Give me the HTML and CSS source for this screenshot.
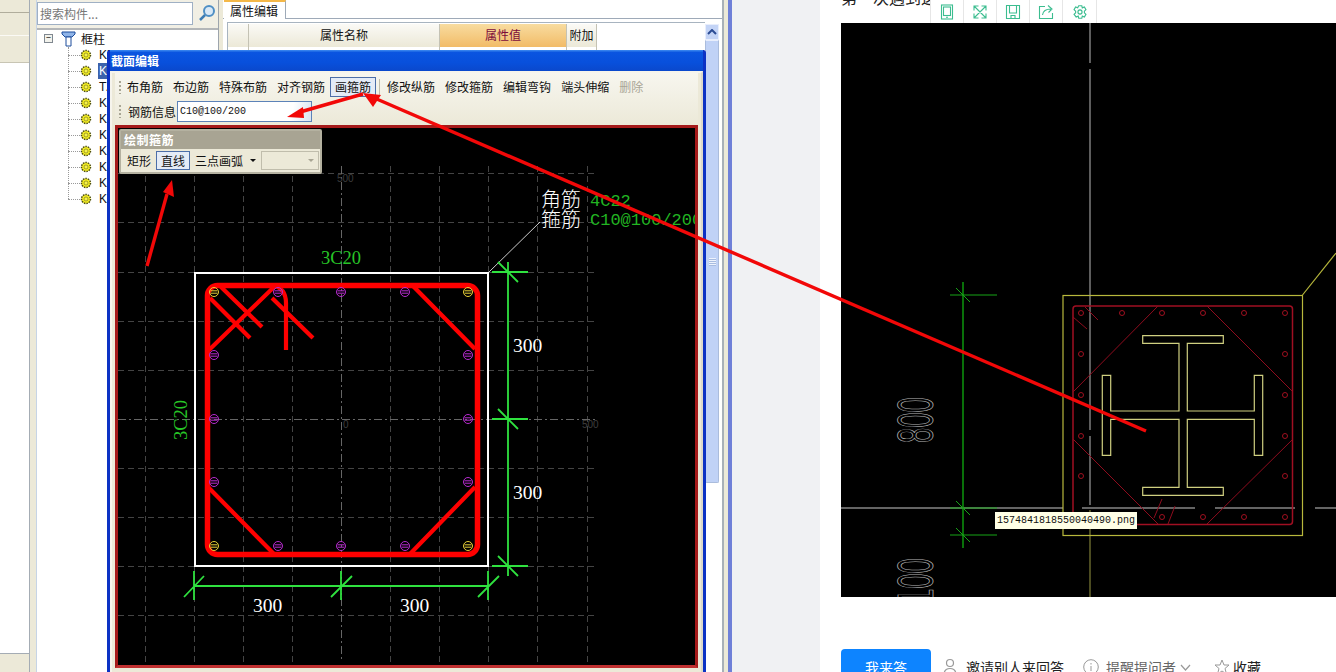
FILE: index.html
```html
<!DOCTYPE html>
<html lang="zh-CN">
<head>
<meta charset="utf-8">
<title>截面编辑</title>
<link rel="stylesheet" href="styles.css">
</head>
<body>
<div class="app">
  <div class="dock">
    <div class="dock-a"></div>
    <div class="dock-b"></div>
    <div class="dock-white"></div>
  </div>
  <div class="tree-panel">
    <div class="search">
      <div class="search-input">搜索构件...</div>
      <svg class="search-icon" viewBox="0 0 20 20"><circle class="mag-ring" cx="12" cy="8" r="5"/><path class="mag-handle" d="M8 12L3 17"/></svg>
    </div>
    <div class="tree">
      <div class="root-row">
        <span class="expander">−</span>
        <svg class="col-icon" viewBox="0 0 15 16"><path class="col-top" d="M1 1H14V3L11 6H4L1 3Z"/><path class="col-shaft" d="M5 6H10V15H5Z"/></svg>
        <span>框柱</span>
      </div>
      <div class="kids">
        <div class="kid"><i class="dash"></i><svg class="gear" viewBox="0 0 12 12"><circle class="gear-out" cx="6" cy="6" r="4.5"/><circle class="gear-in" cx="6" cy="6" r="2"/></svg><span class="kid-label">KZ-1</span></div>
        <div class="kid"><i class="dash"></i><svg class="gear" viewBox="0 0 12 12"><circle class="gear-out" cx="6" cy="6" r="4.5"/><circle class="gear-in" cx="6" cy="6" r="2"/></svg><span class="kid-label sel">KZ-2</span></div>
        <div class="kid"><i class="dash"></i><svg class="gear" viewBox="0 0 12 12"><circle class="gear-out" cx="6" cy="6" r="4.5"/><circle class="gear-in" cx="6" cy="6" r="2"/></svg><span class="kid-label">TZ-1</span></div>
        <div class="kid"><i class="dash"></i><svg class="gear" viewBox="0 0 12 12"><circle class="gear-out" cx="6" cy="6" r="4.5"/><circle class="gear-in" cx="6" cy="6" r="2"/></svg><span class="kid-label">KZ-3</span></div>
        <div class="kid"><i class="dash"></i><svg class="gear" viewBox="0 0 12 12"><circle class="gear-out" cx="6" cy="6" r="4.5"/><circle class="gear-in" cx="6" cy="6" r="2"/></svg><span class="kid-label">KZ-4</span></div>
        <div class="kid"><i class="dash"></i><svg class="gear" viewBox="0 0 12 12"><circle class="gear-out" cx="6" cy="6" r="4.5"/><circle class="gear-in" cx="6" cy="6" r="2"/></svg><span class="kid-label">KZ-5</span></div>
        <div class="kid"><i class="dash"></i><svg class="gear" viewBox="0 0 12 12"><circle class="gear-out" cx="6" cy="6" r="4.5"/><circle class="gear-in" cx="6" cy="6" r="2"/></svg><span class="kid-label">KZ-6</span></div>
        <div class="kid"><i class="dash"></i><svg class="gear" viewBox="0 0 12 12"><circle class="gear-out" cx="6" cy="6" r="4.5"/><circle class="gear-in" cx="6" cy="6" r="2"/></svg><span class="kid-label">KZ-7</span></div>
        <div class="kid"><i class="dash"></i><svg class="gear" viewBox="0 0 12 12"><circle class="gear-out" cx="6" cy="6" r="4.5"/><circle class="gear-in" cx="6" cy="6" r="2"/></svg><span class="kid-label">KZ-8</span></div>
        <div class="kid"><i class="dash"></i><svg class="gear" viewBox="0 0 12 12"><circle class="gear-out" cx="6" cy="6" r="4.5"/><circle class="gear-in" cx="6" cy="6" r="2"/></svg><span class="kid-label">KZ-9</span></div>
      </div>
    </div>
  </div>
  <div class="props">
    <div class="tabs"><div class="tab">属性编辑</div></div>
    <div class="prop-body">
      <div class="prop-table">
        <div class="th th-blank"></div>
        <div class="th th-name">属性名称</div>
        <div class="th th-value">属性值</div>
        <div class="th th-extra">附加</div>
      </div>
      <div class="scroll">
        <div class="scroll-btn"><svg class="chev-up" viewBox="0 0 10 6"><path d="M1 5L5 1L9 5"/></svg></div>
        <div class="scroll-thumb"><div class="grip"></div></div>
      </div>
    </div>
  </div>
</div>

<div class="window">
  <div class="win-title">截面编辑</div>
  <div class="win-body">
    <div class="win-bars">
      <div class="bar">
        <i class="bar-grip"></i>
        <span class="tb">布角筋</span>
        <span class="tb">布边筋</span>
        <span class="tb">特殊布筋</span>
        <span class="tb">对齐钢筋</span>
        <span class="tb tb-on">画箍筋</span>
        <i class="bar-sep"></i>
        <span class="tb">修改纵筋</span>
        <span class="tb">修改箍筋</span>
        <span class="tb">编辑弯钩</span>
        <span class="tb">端头伸缩</span>
        <span class="tb tb-off">删除</span>
      </div>
      <div class="bar">
        <i class="bar-grip"></i>
        <span class="info-label">钢筋信息</span>
        <span class="info-input">C10@100/200</span>
      </div>
    </div>
    <div class="canvas">
      <svg class="cad" viewBox="118 128 577 537">
        <defs>
          <g id="rb"><circle r="4.5"/><path d="M-3.5 -1.2H3.5M-3.5 1.2H3.5"/></g>
        </defs>
        <path class="grid" d="M145.5 166V662M194.5 166V662M243.5 166V662M292.5 166V662M390.5 166V662M439.5 166V662M488.5 166V662M537.5 166V662M587.5 166V662M118 173.5H597M118 222.5H597M118 272.5H597M118 321.5H597M118 370.5H597M118 468.5H597M118 517.5H597M118 566.5H597M118 615.5H597"/>
        <path class="grid-main" d="M341.5 166V662M118 419.5H597"/>
        <text class="dim-label" x="337" y="182">500</text>
        <text class="dim-label" x="582" y="428">500</text>
        <text class="dim-label" x="343" y="428">0</text>

        <rect class="section" x="195" y="273" width="293" height="293"/>
        <path class="leader" d="M489 272L540 222"/>

        <rect class="stirrup" x="207.5" y="285.5" width="270" height="269" rx="10"/>
        <path class="tie" d="M412 285L475 349M208 487L274 554M410 554L475 487M209 350L275 286M219 285L262 327M210 298L250 338"/>
        <path class="tie" d="M272 285C282 287 286 294 286 303V350M272 298L313 338"/>

        <g class="bar-mid">
          <use href="#rb" x="278" y="292"/><use href="#rb" x="341" y="292"/><use href="#rb" x="405" y="292"/>
          <use href="#rb" x="214" y="355"/><use href="#rb" x="468" y="355"/>
          <use href="#rb" x="214" y="419"/><use href="#rb" x="468" y="419"/>
          <use href="#rb" x="214" y="482"/><use href="#rb" x="468" y="482"/>
          <use href="#rb" x="278" y="546"/><use href="#rb" x="341" y="546"/><use href="#rb" x="405" y="546"/>
        </g>
        <g class="bar-corner">
          <use href="#rb" x="214" y="292"/><use href="#rb" x="468" y="292"/>
          <use href="#rb" x="214" y="546"/><use href="#rb" x="468" y="546"/>
        </g>

        <g class="dim">
          <path d="M508 262V576M492 272H528M492 419H528M492 566H528M498 262L518 282M498 409L518 429M498 556L518 576"/>
          <path d="M194 586H489M194 571V600M341 571V600M488 571V600M184 597L204 576M331 597L352 576M478 597L499 576"/>
        </g>
        <text class="t-green" x="321" y="264">3C20</text>
        <text class="t-green" transform="translate(187 440) rotate(-90)">3C20</text>
        <text class="t-white" x="253" y="612">300</text>
        <text class="t-white" x="400" y="612">300</text>
        <text class="t-white" x="513" y="352">300</text>
        <text class="t-white" x="513" y="499">300</text>
        <text class="t-cjk" x="541" y="207">角筋</text>
        <text class="t-cjk" x="541" y="227">箍筋</text>
        <text class="t-mono" x="590" y="206">4C22</text>
        <text class="t-mono" x="590" y="225">C10@100/200</text>
      </svg>
      <div class="float">
        <div class="float-title">绘制箍筋</div>
        <div class="float-row">
          <span class="fb">矩形</span>
          <span class="fb fb-on">直线</span>
          <span class="fb">三点画弧</span>
          <span class="drop"></span>
          <span class="combo"><span class="combo-caret"></span></span>
        </div>
      </div>
    </div>
  </div>
</div>

<div class="gutter"></div>

<div class="content">
  <div class="q-title">第一次遇到这</div>
  <div class="tools">
    <span class="tool"><svg viewBox="0 0 16 16"><rect x="2.5" y="1" width="11" height="14"/><rect x="4.5" y="3" width="7" height="8.5"/><path d="M7 13.3H9"/></svg></span>
    <span class="tool"><svg viewBox="0 0 16 16"><path d="M2 2L14 14M14 2L2 14M2 6.500V2H6.500M9.500 2H14V6.500M2 9.500V14H6.500M9.500 14H14V9.500"/></svg></span>
    <span class="tool"><svg viewBox="0 0 16 16"><path d="M1.500 1.500H14.500V14.500H1.500ZM4.500 1.500V9H11.500V1.500M6 14.500V11.500H10V14.500"/></svg></span>
    <span class="tool"><svg viewBox="0 0 16 16"><path d="M7 2.500H1.500V14.500H14.500V9M4.500 11C5 7 8 5 13 5M10 1.500L14 5L10.500 8.500"/></svg></span>
    <span class="tool"><svg viewBox="0 0 15.5 14"><path d="M6.500 1h3l.5 2 2-.8 1.500 2.600-1.500 1.400v1.600l1.500 1.400-1.500 2.600-2-.8-.5 2h-3l-.5-2-2 .8L2 9.200 3.500 7.800V6.200L2 4.800l1.500-2.600 2 .8z"/><circle cx="7.75" cy="7" r="2"/></svg></span>
  </div>
  <div class="figure">
    <svg class="plan" viewBox="841 23 495 574">
      <path class="axis" d="M1090 23V63M1090 69V430M1090 436V505"/>
      <path class="axis-low" d="M1090 510V597"/>
      <path class="cross" d="M841 508H1063M1082 508H1195M1215 508H1295M1315 508H1336"/>
      <path class="green-v" d="M963 282V548"/>
      <path class="green-h" d="M950 295H997M950 508H997M950 535H997M956 288L970 302M956 501L970 515M956 528L970 542"/>
      <text class="outline" transform="translate(933 443) rotate(-90) scale(.55 1)">800</text>
      <text class="outline" transform="translate(933 604) rotate(-90) scale(.55 1)">100</text>
      <rect class="col-box" x="1063" y="295.5" width="239.5" height="240"/>
      <path class="col-box" d="M1302.500 295L1336 253"/>
      <rect class="red-box" x="1073" y="306" width="219.5" height="218.5" rx="3"/>
      <path class="red-thin" d="M1158 306L1073 392M1207 306L1292 391M1073 439L1158 524M1292 440L1207 524M1085 307L1098 320M1073 317L1087 329M1162 499L1154 518M1175 506L1168 524"/>
      <g class="holes">
        <circle cx="1081" cy="313" r="2.5"/><circle cx="1122" cy="313" r="2.5"/><circle cx="1162" cy="313" r="2.5"/><circle cx="1203" cy="313" r="2.5"/><circle cx="1244" cy="313" r="2.5"/><circle cx="1285" cy="313" r="2.5"/>
        <circle cx="1081" cy="354" r="2.5"/><circle cx="1285" cy="354" r="2.5"/>
        <circle cx="1081" cy="395" r="2.5"/><circle cx="1285" cy="395" r="2.5"/>
        <circle cx="1081" cy="436" r="2.5"/><circle cx="1285" cy="436" r="2.5"/>
        <circle cx="1081" cy="476" r="2.5"/><circle cx="1285" cy="476" r="2.5"/>
        <circle cx="1081" cy="517" r="2.5"/><circle cx="1122" cy="517" r="2.5"/><circle cx="1162" cy="517" r="2.5"/><circle cx="1203" cy="517" r="2.5"/><circle cx="1244" cy="517" r="2.5"/><circle cx="1285" cy="517" r="2.5"/>
      </g>
      <path class="steel" d="M1142.700 335.700H1223.300V343.300H1187.300V411H1254.300V375.300H1262.700V455.300H1254.300V419.300H1187.300V487.300H1223.300V495.300H1142.700V487.300H1179V419.300H1110.700V455.300H1102.300V375.300H1110.700V411H1179V343.300H1142.700Z"/>
    </svg>
    <div class="file-tip">1574841818550040490.png</div>
  </div>
  <div class="actions">
    <button class="answer">我来答</button>
    <span class="act act-invite"><svg class="act-icon-p" viewBox="0 0 14 18"><circle cx="7" cy="5" r="3.5"/><path d="M1 17C1 12 4 10.500 7 10.500S13 12 13 17"/></svg><span>邀请别人来回答</span></span>
    <span class="act act-remind"><svg class="act-icon" viewBox="0 0 16 16"><circle cx="8" cy="8" r="7.3"/><path d="M8 4V5.500M8 7V12"/></svg><span>提醒提问者</span><svg class="act-chev" viewBox="0 0 11 7"><path d="M1 1L5.500 6L10 1"/></svg></span>
    <span class="act act-star"><svg class="act-icon" viewBox="0 0 16 16"><path d="M8 1L10 6H15L11 9.500L12.500 15L8 12L3.500 15L5 9.500L1 6H6Z"/></svg><span>收藏</span></span>
  </div>
</div>

<svg class="arrows" viewBox="0 0 1336 672">
  <path class="arrow-line" d="M1146 431L372 97"/>
  <path class="arrow-head" d="M363 93L381 95L373 107Z"/>
  <path class="arrow-line" d="M363 94L300 112"/>
  <path class="arrow-head" d="M287 117L303 107L304 118Z"/>
  <path class="arrow-line" d="M147 266L167 194"/>
  <path class="arrow-head" d="M172 180L163 192L174 197Z"/>
</svg>
</body>
</html>
```

FILE: styles.css
```css
* { box-sizing: border-box; }
html, body { margin: 0; height: 100%; }
body {
  position: relative;
  display: flex;
  width: 1336px;
  height: 672px;
  overflow: hidden;
  background: #fff;
  font-family: "Noto Sans CJK SC", "Liberation Sans", sans-serif;
  font-size: 12px;
  color: #111;
}

/* ---------- desktop application ---------- */
.app {
  display: flex;
  width: 732px;
  height: 672px;
  flex: none;
  background: #ece9d8;
  border-right: 4px solid #6f80d8;
}
.dock {
  width: 30px;
  flex: none;
  display: flex;
  flex-direction: column;
  border-right: 1px solid #a4acb4;
  padding-bottom: 18px;
}
.dock-a { height: 13px; border-bottom: 1px solid #b0ad9c; }
.dock-b { height: 23px; border-bottom: 1px solid #fbfaf5; }
.dock-white {
  flex: 1;
  margin-top: 26px;
  background: #fff;
  border-top: 1px solid #c8c5b4;
  border-bottom: 1px solid #a4acb4;
}
.tree-panel {
  width: 183px;
  flex: none;
  margin-left: 6px;
  display: flex;
  flex-direction: column;
  border-left: 1px solid #c6d4e6;
  border-right: 1px solid #9da5ad;
}
.search {
  height: 30px;
  display: flex;
  align-items: center;
  padding-bottom: 2px;
  border-bottom: 2px solid #b3b6b8;
  background: #f1efe4;
}
.search-input {
  width: 156px;
  height: 23px;
  line-height: 21px;
  background: #fff;
  border: 1px solid #9fb0c4;
  padding-left: 2px;
  font-size: 12px;
  color: #777;
}
.search-icon { width: 20px; height: 20px; margin-left: 4px; }
.mag-ring { fill: #d8e8f6; stroke: #4f8fc4; stroke-width: 2; }
.mag-handle { fill: none; stroke: #3d7cb4; stroke-width: 2.5; }
.tree {
  flex: 1;
  background: #fff;
  padding-left: 7px;
}
.root-row {
  height: 17px;
  display: flex;
  align-items: center;
  font-size: 12px;
}
.expander {
  width: 9px;
  height: 9px;
  border: 1px solid #808890;
  background: #f2f2ec;
  font-size: 9px;
  line-height: 6px;
  text-align: center;
  color: #000;
  margin-right: 8px;
}
.col-icon { width: 15px; height: 16px; margin-right: 5px; flex: none; }
.col-top { fill: #8fb4e8; stroke: #1c4c9c; }
.col-shaft { fill: #fff; stroke: #1c4c9c; }
.kids {
  position: relative;
  margin-left: 24px;
}
.kids::before {
  content: "";
  position: absolute;
  left: 0;
  top: 0;
  bottom: 8px;
  border-left: 1px dotted #999;
}
.kid {
  height: 16px;
  display: flex;
  align-items: center;
}
.dash {
  width: 12px;
  flex: none;
  border-top: 1px dotted #999;
}
.gear { width: 12px; height: 12px; flex: none; }
.gear-out { fill: #f4ee20; stroke: #4c4c14; stroke-width: 1.5; stroke-dasharray: 1.5 1; }
.gear-in { fill: #f7f24a; stroke: #6c6c20; stroke-width: .6; }
.kid-label {
  margin-left: 6px;
  padding-left: 1px;
  font-family: "Liberation Sans", sans-serif;
  font-size: 12px;
  line-height: 16px;
  color: #111;
}
.sel { background: #3c62ac; color: #fff; }
.props {
  width: 501px;
  flex: none;
  margin-left: 4px;
  display: flex;
  flex-direction: column;
  background: #fff;
  border-right: 2px solid #a8b0b8;
}
.tabs {
  height: 19px;
  flex: none;
  padding-left: 1px;
  border-bottom: 1px solid #9eaab8;
}
.tab {
  width: 62px;
  height: 19px;
  line-height: 18px;
  padding-left: 6px;
  background: #fff;
  border-top: 2px solid #f4b848;
  border-right: 1px solid #9eaab8;
  font-size: 12px;
}
.prop-body {
  flex: 1;
  display: flex;
  padding: 3px 3px 0 4px;
}
.prop-table {
  flex: 1;
  height: 100px;
  display: flex;
  align-items: flex-start;
  border-top: 1px solid #a8b4c0;
  border-left: 1px solid #a8b4c0;
  padding-top: 1px;
}
.th {
  height: 30px;
  line-height: 22px;
  text-align: center;
  font-size: 12px;
  background: linear-gradient(#fbfaf6, #ece9d8 75%, #fff 76%);
  border-right: 1px solid #c4c2b4;
}
.th-blank { width: 21px; }
.th-name { width: 191px; }
.th-value { width: 127px; color: #7c0c3c; background: linear-gradient(#f8dca0, #f2bc68 75%, #fff 76%); }
.th-extra { width: 30px; }
.scroll { width: 14px; flex: none; margin-top: 2px; }
.scroll-btn {
  height: 16px;
  display: flex;
  align-items: center;
  justify-content: center;
  background: #c4d4f6;
  border: 1px solid #e8eefc;
}
.chev-up { width: 10px; height: 6px; }
.chev-up path { fill: none; stroke: #2c4c94; stroke-width: 2; }
.scroll-thumb {
  height: 443px;
  display: flex;
  align-items: center;
  justify-content: center;
  background: #c0d2f6;
  border: 1px solid #aabcdc;
  border-top-color: #e8eefc;
  border-radius: 0 0 2px 2px;
}
.grip {
  width: 7px;
  height: 8px;
  background: repeating-linear-gradient(#eef3fd 0 1px, #a8bce0 1px 2px);
}

/* ---------- section editor window ---------- */
.window {
  position: absolute;
  left: 107px;
  top: 50px;
  width: 599px;
  height: 640px;
  display: flex;
  flex-direction: column;
  background: #0c38cc;
  border: 3px solid #0c32c4;
  border-top: 0;
  border-radius: 3px 3px 0 0;
}
.win-title {
  height: 21px;
  flex: none;
  padding-left: 1px;
  line-height: 21px;
  background: linear-gradient(#3f8cf0, #0a54e0 12%, #0850dc 60%, #0a48cc);
  color: #fff;
  font-size: 12px;
  font-weight: 700;
}
.win-body {
  flex: 1;
  padding: 0 3px;
  background: #ece9d8;
  border: 2px solid #dcd9cb;
  border-left-color: #f6f4ec;
  border-top-color: #f6f4ec;
}
.win-bars {
  height: 52px;
  padding-top: 3px;
  background: linear-gradient(#f7f6ef, #ece9d8);
}
.bar {
  height: 22px;
  margin-bottom: 2px;
  display: flex;
  align-items: center;
  padding-left: 4px;
}
.bar-grip {
  width: 2px;
  height: 13px;
  margin-right: 1px;
  flex: none;
  background: repeating-linear-gradient(#a8a594 0 2px, transparent 2px 4px);
}
.tb {
  height: 20px;
  padding: 0 4px;
  line-height: 18px;
  border: 1px solid transparent;
  font-size: 12px;
  white-space: nowrap;
  flex: none;
}
.tb-on { background: #e4ebf6; border-color: #4c6ea8; }
.tb-off { color: #a8a596; }
.bar-sep { width: 1px; height: 16px; margin: 0 2px 0 3px; background: #c0bdac; flex: none; }
.info-label { padding-left: 6px; font-size: 12px; white-space: nowrap; }
.info-input {
  width: 135px;
  height: 21px;
  margin-left: 1px;
  padding-left: 2px;
  line-height: 19px;
  background: linear-gradient(100deg, #fff 85%, #d8e4f2);
  border: 1px solid #5c82b8;
  font-family: "Liberation Mono", monospace;
  font-size: 10px;
}
.canvas {
  position: relative;
  height: 543px;
  border: 3px solid #a51a1a;
  border-bottom-color: #c03030;
  background: #000;
}
.cad { display: block; width: 577px; height: 537px; }
.grid { fill: none; stroke: #444; stroke-dasharray: 6 4; }
.grid-main { fill: none; stroke: #666; stroke-dasharray: 8 3 2 3; }
.dim-label { font-family: "Liberation Sans", sans-serif; font-size: 10px; fill: #3e3e3e; }
.section { fill: none; stroke: #fff; stroke-width: 2; }
.leader { fill: none; stroke: #fff; stroke-width: .8; }
.stirrup { fill: none; stroke: #f00; stroke-width: 5.5; }
.tie { fill: none; stroke: #f00; stroke-width: 4.2; }
.bar-mid { fill: none; stroke: #b82cd0; stroke-width: 1; }
.bar-corner { fill: none; stroke: #e8d038; stroke-width: 1; }
.dim { fill: none; stroke: #2fe23f; stroke-width: 1.8; }
.t-green { font-family: "Liberation Serif", serif; font-size: 18.5px; fill: #27c427; }
.t-white { font-family: "Liberation Serif", serif; font-size: 19.5px; fill: #fff; }
.t-cjk { font-family: "Noto Sans CJK SC", sans-serif; font-size: 20px; font-weight: 300; fill: #fff; }
.t-mono { font-family: "Liberation Mono", monospace; font-size: 17px; fill: #22b422; }
.float {
  position: absolute;
  left: 1px;
  top: 1px;
  width: 203px;
  height: 45px;
  background: #ece9d8;
  border: 2px solid #b4b1a0;
  border-radius: 2px;
}
.float-title {
  height: 18px;
  padding-left: 3px;
  line-height: 18px;
  background: #a8a493;
  color: #fff;
  font-size: 12px;
  font-weight: 700;
  letter-spacing: .5px;
}
.float-row {
  height: 22px;
  display: flex;
  align-items: center;
  padding-left: 1px;
}
.fb {
  height: 19px;
  padding: 0 4px;
  line-height: 17px;
  border: 1px solid transparent;
  font-size: 12px;
  white-space: nowrap;
  flex: none;
}
.fb-on { background: #e4ebf6; border-color: #4c6ea8; }
.drop {
  width: 6px;
  height: 3px;
  margin: 0 5px 0 2px;
  flex: none;
  border: 3px solid transparent;
  border-top: 3px solid #111;
  border-bottom: 0;
}
.combo {
  width: 58px;
  height: 19px;
  flex: none;
  display: flex;
  align-items: center;
  justify-content: flex-end;
  padding-right: 4px;
  background: #ece9d8;
  border: 1px solid #c0bdac;
}
.combo-caret { border: 3px solid transparent; border-top: 3px solid #a8a594; border-bottom: 0; }

/* ---------- web page on the right ---------- */
.gutter {
  width: 88px;
  flex: none;
  background: #f0f1f3;
}
.content {
  position: relative;
  flex: 1;
  min-width: 0;
  padding-left: 21px;
  background: #fff;
  overflow: hidden;
}
.q-title {
  height: 34px;
  margin-top: -11px;
  line-height: 16px;
  font-size: 16px;
  white-space: nowrap;
  color: #222;
}
.tools {
  position: absolute;
  left: 110px;
  top: 0;
  height: 24px;
  display: flex;
  background: #fff;
  border: 1px solid #e6e6e6;
  border-top: 0;
}
.tool {
  width: 33px;
  display: flex;
  align-items: center;
  justify-content: center;
  border-right: 1px solid #e6e6e6;
}
.tool:last-child { border-right: 0; }
.tool svg { width: 16px; height: 16px; fill: none; stroke: #3cbd90; stroke-width: 1.1; }
.figure { position: relative; width: 495px; height: 574px; }
.plan { display: block; width: 495px; height: 574px; background: #000; }
.axis { fill: none; stroke: #7c7c7c; stroke-width: 1.5; }
.axis-low { fill: none; stroke: #66662c; stroke-width: 1.5; }
.cross { fill: none; stroke: #c8c8c8; }
.green-v { fill: none; stroke: #0d960d; stroke-width: 1.5; }
.green-h { fill: none; stroke: #17a517; }
.outline {
  font-family: "Liberation Sans", sans-serif;
  font-size: 50px;
  fill: none;
  stroke: #b4b4b4;
  stroke-width: .8;
}
.col-box { fill: none; stroke: #b8b83c; stroke-width: 1.2; }
.red-box { fill: none; stroke: #a00f22; stroke-width: 1.5; }
.red-thin { fill: none; stroke: #8e0c1e; }
.holes { fill: none; stroke: #a01020; }
.steel { fill: none; stroke: #cfcf80; stroke-width: 1.2; }
.file-tip {
  position: absolute;
  left: 154px;
  top: 489px;
  width: 142px;
  height: 17px;
  padding-left: 2px;
  line-height: 17px;
  background: #ffffe6;
  color: #111;
  font-family: "Liberation Mono", monospace;
  font-size: 10px;
}
.actions {
  display: flex;
  align-items: center;
  height: 36px;
  margin-top: 52px;
  font-size: 14px;
}
.answer {
  width: 90px;
  height: 36px;
  flex: none;
  padding: 0;
  border: 0;
  border-radius: 4px;
  background: #0d84ff;
  color: #fff;
  font: inherit;
}
.act { display: flex; align-items: center; flex: none; }
.act svg { fill: none; }
.act-invite { margin-left: 12px; gap: 9px; color: #222; }
.act-remind { margin-left: 19px; gap: 7px; color: #666; }
.act-star { margin-left: 23px; gap: 3px; color: #222; }
.act-icon-p { width: 14px; height: 18px; stroke: #999; stroke-width: 1.2; }
.act-icon { width: 16px; height: 16px; stroke: #999; stroke-width: 1; }
.act-chev { width: 11px; height: 7px; margin-left: -3px; stroke: #999; stroke-width: 1.2; }

/* ---------- annotation arrows, drawn over everything ---------- */
.arrows {
  position: absolute;
  left: 0;
  top: 0;
  width: 1336px;
  height: 672px;
  pointer-events: none;
}
.arrow-line { fill: none; stroke: #f20808; stroke-width: 3.4; }
.arrow-head { fill: #f20808; }
```
